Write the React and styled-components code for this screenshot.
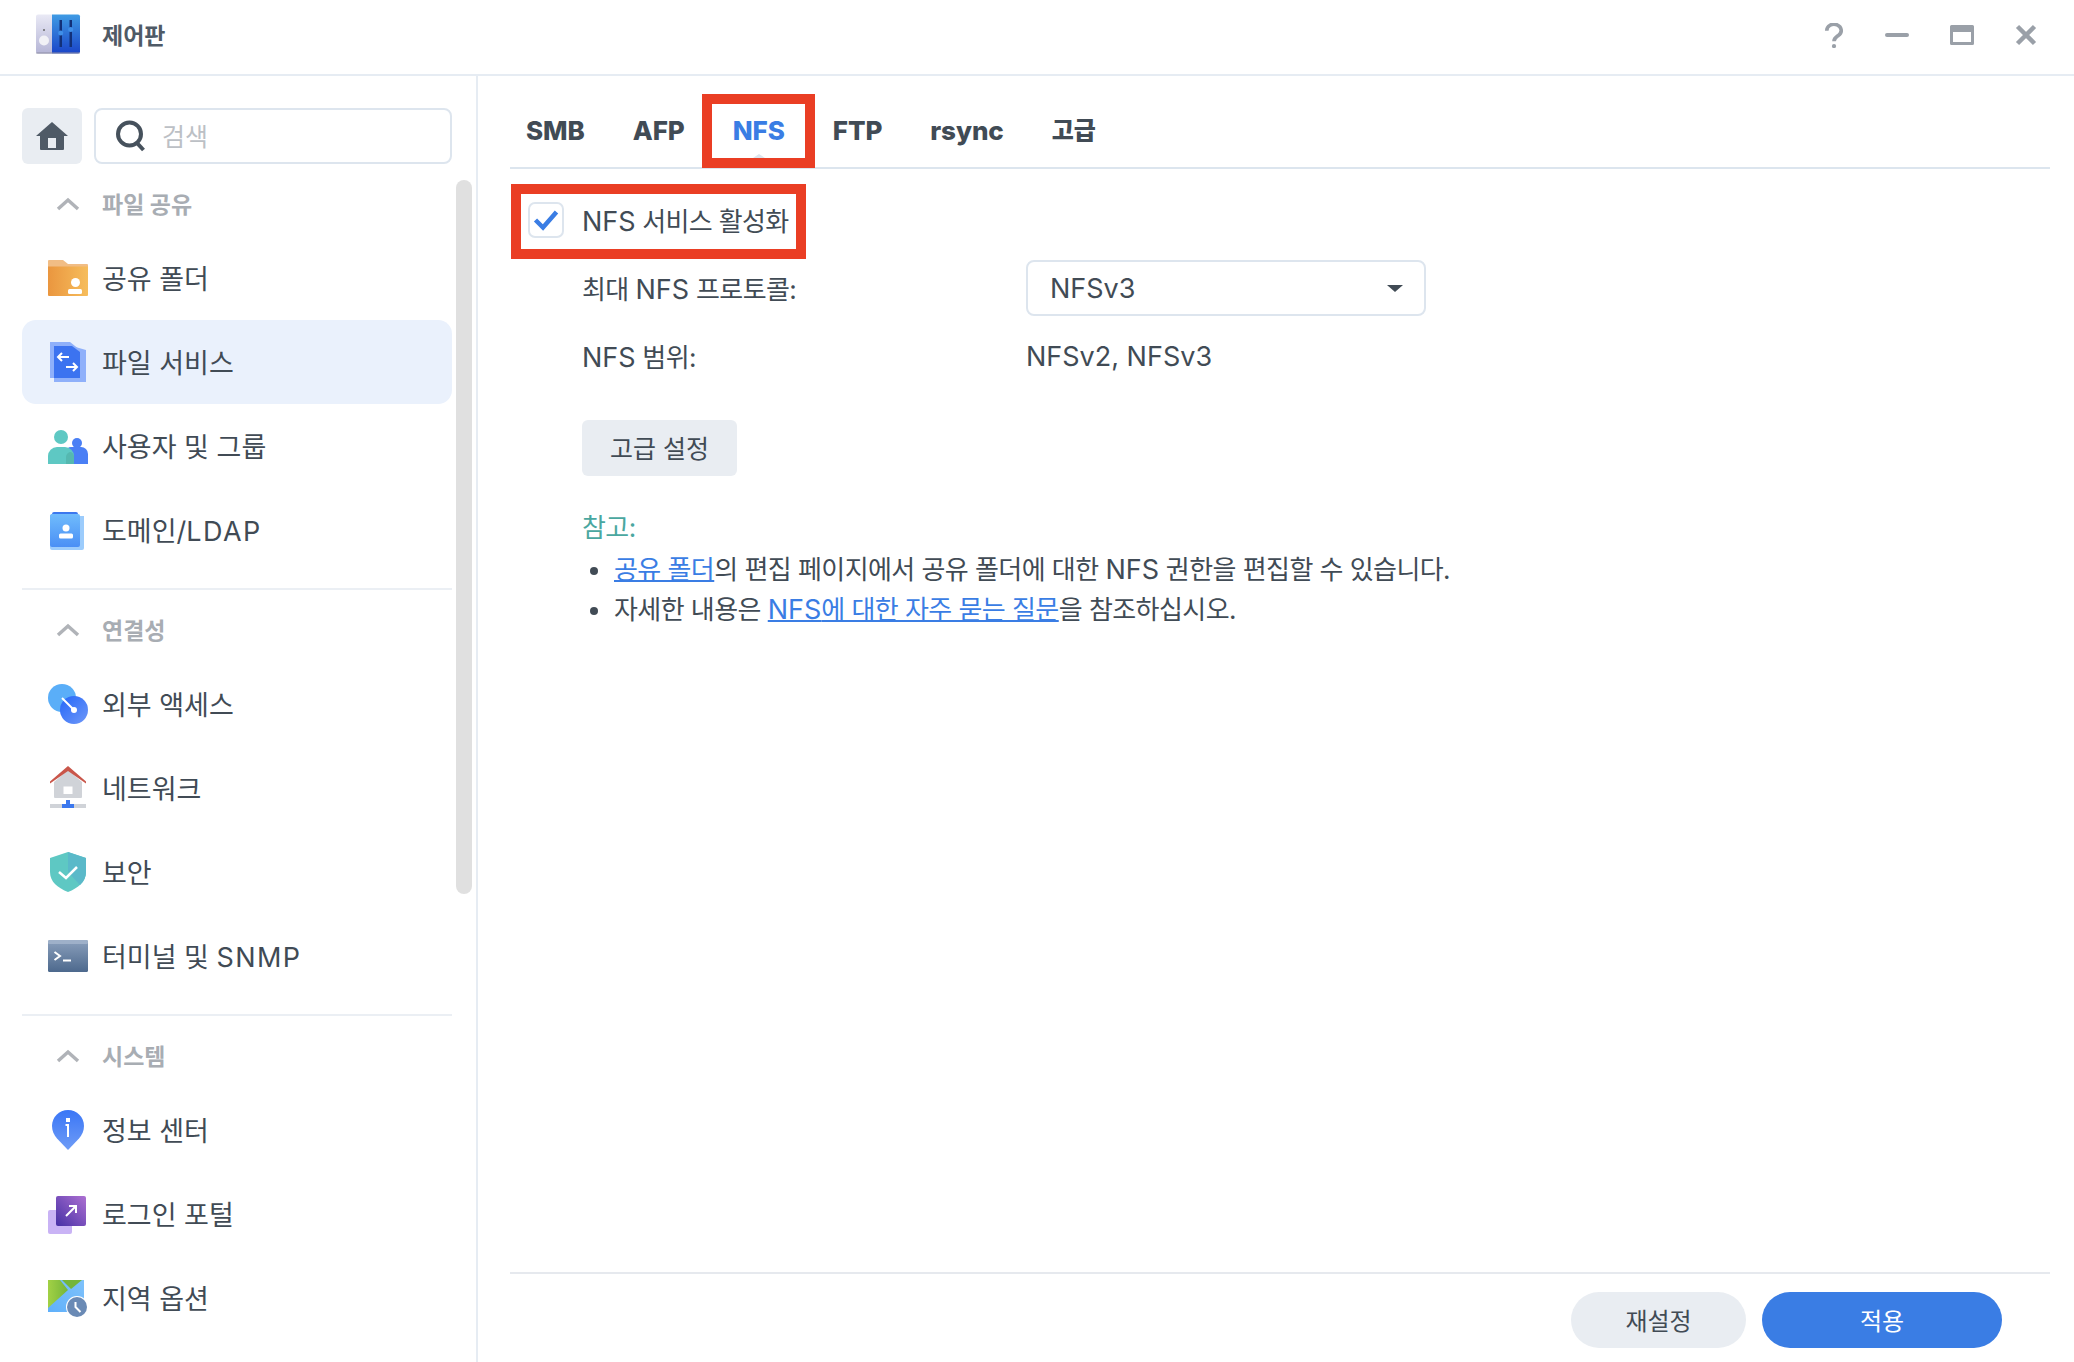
import React from "react";
import styled, { createGlobalStyle } from "styled-components";

const GlobalStyle = createGlobalStyle`
  html, body {
    margin: 0;
    padding: 0;
    background: #fff;
  }
  body {
    font-family: Inter, "Noto Sans CJK KR", sans-serif;
    font-size: 26px;
    color: #414b55;
    overflow: hidden;
  }
`;

const LogoIcon = () => (
  <svg width="48" height="42" viewBox="0 0 48 42">
    <defs>
      <linearGradient id="logoBlue" x1="0" y1="0" x2="0" y2="1">
        <stop offset="0" stopColor="#3f9be4" />
        <stop offset="1" stopColor="#1a45c8" />
      </linearGradient>
      <linearGradient id="logoGrey" x1="0" y1="0" x2="0" y2="1">
        <stop offset="0" stopColor="#e9e9f5" />
        <stop offset="1" stopColor="#b5b5d6" />
      </linearGradient>
    </defs>
    <path d="M2 2.5a2 2 0 0 1 2-2h14v39H4a2 2 0 0 1-2-2z" fill="url(#logoGrey)" />
    <path d="M18 .5h26a2 2 0 0 1 2 2v35a2 2 0 0 1-2 2H18z" fill="url(#logoBlue)" />
    <rect x="2" y="38" width="44" height="2" rx="1" fill="#8d8da3" opacity=".5" />
    <circle cx="10" cy="26.5" r="5" fill="#f1f1f6" />
    <circle cx="10" cy="16" r="1" fill="#666" />
    <rect x="25.5" y="6" width="2.5" height="27" fill="#123078" />
    <rect x="35.5" y="6" width="2.5" height="27" fill="#123078" />
    <circle cx="26.7" cy="19" r="2.5" fill="#3f8fe8" />
    <circle cx="36.7" cy="15.5" r="2.5" fill="#3f8fe8" />
  </svg>
);

const FolderIcon = () => (
  <svg width="40" height="40" viewBox="0 0 40 40">
    <defs>
      <linearGradient id="folderBody" x1="0" y1="0" x2="1" y2="0">
        <stop offset="0" stopColor="#ea963f" />
        <stop offset="1" stopColor="#f6bd5c" />
      </linearGradient>
    </defs>
    <path d="M0 3a1 1 0 0 1 1-1h14l5 4h19a1 1 0 0 1 1 1v6H0z" fill="#f1bd85" />
    <path d="M0 8.5h40V37a1 1 0 0 1-1 1H1a1 1 0 0 1-1-1z" fill="url(#folderBody)" />
    <circle cx="27.5" cy="24.5" r="4.5" fill="#fff" />
    <rect x="20" y="31" width="14" height="5" rx="1.5" fill="#fff" />
  </svg>
);

const FileServiceIcon = () => (
  <svg width="40" height="40" viewBox="0 0 40 40">
    <path d="M2 0h20l10 8v28H2z" fill="#8fb0fa" />
    <path d="M6 4h18l14 4v32H6z" fill="#8fb0fa" />
    <path d="M6 4h18l8 6v26H6z" fill="#3c73f0" />
    <path d="M21 15H10m4-4-4 4 4 4M18 25h11m-4-4 4 4-4 4" fill="none" stroke="#fff" strokeWidth="2" />
  </svg>
);

const UsersIcon = () => (
  <svg width="40" height="40" viewBox="0 0 40 40">
    <circle cx="13" cy="11" r="7" fill="#5ec8c3" />
    <path d="M18 26a5 5 0 0 1 5-5h10a7 7 0 0 1 7 7v10H18z" fill="#4a7ff5" />
    <circle cx="29" cy="17" r="5" fill="#4a7ff5" />
    <path d="M0 30a9 9 0 0 1 9-9h8a9 9 0 0 1 9 9v8H0z" fill="#5ec8c3" />
    <path d="M18 38v-7a5 5 0 0 1 5-5 6 6 0 0 1 3 3.5V38z" fill="#55b8b0" />
  </svg>
);

const DomainIcon = () => (
  <svg width="40" height="40" viewBox="0 0 40 40">
    <defs>
      <linearGradient id="domainBody" x1="0" y1="0" x2="0" y2="1">
        <stop offset="0" stopColor="#70bcfc" />
        <stop offset="1" stopColor="#4a8ff5" />
      </linearGradient>
    </defs>
    <path d="M4 4a2 2 0 0 1 2-2h22a2 2 0 0 1 2 2v2H2z" fill="#3c78ee" />
    <path d="M2 6h34v32a2 2 0 0 1-2 2H4a2 2 0 0 1-2-2z" fill="#9cccfc" />
    <path d="M2 6a2 2 0 0 1 2-2h26a2 2 0 0 1 2 2v29a2 2 0 0 1-2 2H4a2 2 0 0 1-2-2z" fill="url(#domainBody)" />
    <circle cx="18" cy="18" r="3.5" fill="#fff" />
    <rect x="11" y="23.5" width="14" height="5" rx="1.5" fill="#fff" />
  </svg>
);

const ExternalIcon = () => (
  <svg width="40" height="40" viewBox="0 0 40 40">
    <defs>
      <linearGradient id="extDial" x1="0" y1="0" x2="1" y2="1">
        <stop offset="0" stopColor="#2466f8" />
        <stop offset="1" stopColor="#6f98f8" />
      </linearGradient>
    </defs>
    <circle cx="14" cy="14" r="14" fill="#5aaef8" />
    <circle cx="26" cy="26" r="14" fill="url(#extDial)" />
    <path d="M14 14 26 26" stroke="#fff" strokeWidth="2" />
    <circle cx="26" cy="26" r="3" fill="#fff" />
  </svg>
);

const NetworkIcon = () => (
  <svg width="40" height="40" viewBox="0 0 40 40" overflow="visible">
    <path d="M20 2 34 14V29a1 1 0 0 1-1 1H7a1 1 0 0 1-1-1V14z" fill="#d0d3d8" />
    <path d="M20-2 38 13.5V15.5L20 3 2 15.5V13.5z" fill="#c9564a" />
    <rect x="15.5" y="18.5" width="9" height="7.5" fill="#fff" />
    <rect x="2" y="36" width="36" height="4" fill="#d0d3d8" />
    <rect x="18" y="32" width="4" height="4" fill="#3c78ee" />
    <rect x="14" y="36" width="12" height="4" fill="#3c78ee" />
  </svg>
);

const ShieldIcon = () => (
  <svg width="40" height="40" viewBox="0 0 40 40">
    <path d="M20 0 38 6v14c0 10-8 16-18 20C10 36 2 30 2 20V6z" fill="#5ec8c3" />
    <path d="M20 0 38 6v14c0 5-2 9-6 13L20 20z" fill="#5ab9c9" />
    <path d="M11 20l7 6 11-11" fill="none" stroke="#fff" strokeWidth="2.5" />
  </svg>
);

const TerminalIcon = () => (
  <svg width="40" height="40" viewBox="0 0 40 40">
    <defs>
      <linearGradient id="termBody" x1="0" y1="0" x2="0" y2="1">
        <stop offset="0" stopColor="#8a9fbc" />
        <stop offset="1" stopColor="#4d698d" />
      </linearGradient>
    </defs>
    <rect x="0" y="4" width="40" height="32" rx="1.5" fill="url(#termBody)" />
    <rect x="0" y="4" width="40" height="4" rx="1.5" fill="#9eb0c9" />
    <path d="M6.5 16 12 20l-5.5 4" fill="none" stroke="#fff" strokeWidth="2" />
    <path d="M15 24.5h8" stroke="#fff" strokeWidth="2" />
  </svg>
);

const InfoIcon = () => (
  <svg width="40" height="40" viewBox="0 0 40 40">
    <defs>
      <linearGradient id="infoPin" x1="0" y1="0" x2="0" y2="1">
        <stop offset="0" stopColor="#3a76f6" />
        <stop offset="1" stopColor="#6f9cf6" />
      </linearGradient>
    </defs>
    <path d="M20 0c9 0 16 7 16 16 0 5-2 9-5 12.5L20 40 9 28.5C6 25 4 21 4 16 4 7 11 0 20 0z" fill="url(#infoPin)" />
    <rect x="18" y="8" width="4" height="4" fill="#fff" />
    <path d="M17.5 15H20v12" fill="none" stroke="#fff" strokeWidth="2" />
  </svg>
);

const LoginIcon = () => (
  <svg width="40" height="40" viewBox="0 0 40 40">
    <defs>
      <linearGradient id="loginBody" x1="0" y1="1" x2="1" y2="0">
        <stop offset="0" stopColor="#4630a5" />
        <stop offset="1" stopColor="#ad70d2" />
      </linearGradient>
    </defs>
    <rect x="0" y="16" width="24" height="24" rx="2" fill="#c9b3f5" />
    <rect x="8" y="2" width="30" height="30" rx="2" fill="url(#loginBody)" />
    <path d="M18 22l10-10m-7 0h7v7" fill="none" stroke="#fff" strokeWidth="2" />
  </svg>
);

const RegionIcon = () => (
  <svg width="40" height="40" viewBox="0 0 40 40">
    <defs>
      <linearGradient id="regionGreen" x1="0" y1="0" x2="1" y2="0">
        <stop offset="0" stopColor="#a2d145" />
        <stop offset="1" stopColor="#74b53a" />
      </linearGradient>
      <linearGradient id="regionBlue" x1="0" y1="1" x2="1" y2="0">
        <stop offset="0" stopColor="#5fb0fb" />
        <stop offset="1" stopColor="#7fc2fb" />
      </linearGradient>
    </defs>
    <path d="M0 2h36v32H0z" fill="url(#regionBlue)" />
    <path d="M0 2h12l8 10L0 30z" fill="url(#regionGreen)" />
    <path d="M14 2h20L23 11z" fill="#74b53a" />
    <circle cx="29" cy="29" r="11" fill="#fff" />
    <circle cx="29" cy="29" r="10" fill="#6a8ab5" />
    <path d="M27.5 24v5l5 5" fill="none" stroke="#fff" strokeWidth="2" />
  </svg>
);

const HomeIcon = () => (
  <svg width="34" height="30" viewBox="0 0 34 30">
    <path d="M17 1 33 15H29V28a1 1 0 0 1-1 1H6a1 1 0 0 1-1-1V15H1z" fill="#4f5a66" />
    <rect x="13" y="17" width="8" height="10" fill="#e9edf2" />
  </svg>
);

const SearchIcon = () => (
  <svg width="30" height="32" viewBox="0 0 30 32">
    <circle cx="13.5" cy="14" r="11.5" fill="none" stroke="#46515c" strokeWidth="4" />
    <path d="M21 23 27.5 30" stroke="#46515c" strokeWidth="4" />
  </svg>
);

const ChevronIcon = () => (
  <svg width="24" height="14" viewBox="0 0 24 14">
    <path d="M2 12 12 3l10 9" fill="none" stroke="#b0b3b8" strokeWidth="3.5" />
  </svg>
);

const sections = [
  {
    title: "파일 공유",
    items: [
      { key: "folder", label: "공유 폴더", icon: FolderIcon },
      { key: "file", label: "파일 서비스", icon: FileServiceIcon, active: true },
      { key: "user", label: "사용자 및 그룹", icon: UsersIcon },
      { key: "domain", label: "도메인/", latin: "LDAP", icon: DomainIcon },
    ],
  },
  {
    title: "연결성",
    items: [
      { key: "external", label: "외부 액세스", icon: ExternalIcon },
      { key: "network", label: "네트워크", icon: NetworkIcon },
      { key: "security", label: "보안", icon: ShieldIcon },
      { key: "terminal", label: "터미널 및 ", latin: "SNMP", icon: TerminalIcon },
    ],
  },
  {
    title: "시스템",
    items: [
      { key: "info", label: "정보 센터", icon: InfoIcon },
      { key: "login", label: "로그인 포털", icon: LoginIcon },
      { key: "region", label: "지역 옵션", icon: RegionIcon },
    ],
  },
];

const tabs = ["SMB", "AFP", "NFS", "FTP", "rsync", "고급"];

const App = () => {
  return (
    <Window>
      <GlobalStyle />
      <TitleBar>
        <AppTitle>
          <LogoIcon />
          <span>제어판</span>
        </AppTitle>
        <WindowControls>
          <svg width="20" height="25" viewBox="0 0 20 26">
            <path d="M2.5 8a7.5 6.5 0 1 1 12 5c-2.5 1.8-4.5 3-4.5 6" fill="none" stroke="#9aa0a8" strokeWidth="3.8" />
            <circle cx="10" cy="24" r="2.2" fill="#9aa0a8" />
          </svg>
          <svg width="24" height="6" viewBox="0 0 24 6">
            <rect y="1" width="24" height="4" rx="2" fill="#9aa0a8" />
          </svg>
          <svg width="24" height="20" viewBox="0 0 24 20">
            <path fillRule="evenodd" d="M1.5 0h21A1.5 1.5 0 0 1 24 1.5v17a1.5 1.5 0 0 1-1.5 1.5h-21A1.5 1.5 0 0 1 0 18.5v-17A1.5 1.5 0 0 1 1.5 0zM3 7v10h18V7z" fill="#9aa0a8" />
          </svg>
          <svg width="22" height="22" viewBox="0 0 22 22">
            <path d="M2.5 2.5l17 17m0-17-17 17" fill="none" stroke="#9aa0a8" strokeWidth="4.5" />
          </svg>
        </WindowControls>
      </TitleBar>
      <Body>
        <Sidebar>
          <SearchRow>
            <HomeButton>
              <HomeIcon />
            </HomeButton>
            <SearchBox>
              <SearchIcon />
              <span>검색</span>
            </SearchBox>
          </SearchRow>
          {sections.map((section, index) => (
            <React.Fragment key={section.title}>
              {index > 0 && <Divider />}
              <SectionHeader>
                <ChevronIcon />
                <span>{section.title}</span>
              </SectionHeader>
              {section.items.map((item) => (
                <NavItem key={item.key} $active={item.active}>
                  <item.icon />
                  <span>
                    {item.label}
                    {item.latin && <NavLatin>{item.latin}</NavLatin>}
                  </span>
                </NavItem>
              ))}
            </React.Fragment>
          ))}
          <ScrollThumb />
        </Sidebar>
        <Main>
          <TabBar>
            {tabs.map((tab) => (
              <Tab key={tab} $active={tab === "NFS"} $hangul={tab === "고급"}>
                {tab}
              </Tab>
            ))}
          </TabBar>
          <Form>
            <EnableRow>
              <Checkbox>
                <svg width="26" height="22" viewBox="0 0 26 22">
                  <path d="M2.5 11 10 18.5 23.5 3" fill="none" stroke="#3a7de4" strokeWidth="4.5" />
                </svg>
              </Checkbox>
              <span>
                <Latin>NFS</Latin> 서비스 활성화
              </span>
            </EnableRow>
            <FieldRow>
              <FieldLabel>
                최대 <Latin>NFS</Latin> 프로토콜:
              </FieldLabel>
              <Select>
                <Latin>NFSv3</Latin>
                <SelectCaret />
              </Select>
            </FieldRow>
            <FieldRow>
              <FieldLabel>
                <Latin>NFS</Latin> 범위:
              </FieldLabel>
              <Latin>NFSv2, NFSv3</Latin>
            </FieldRow>
            <AdvancedButton>고급 설정</AdvancedButton>
            <Note>
              <NoteTitle>참고:</NoteTitle>
              <NoteList>
                <li>
                  <a href="#folder">공유 폴더</a>의 편집 페이지에서 공유 폴더에 대한 <Latin>NFS</Latin> 권한을 편집할 수 있습니다.
                </li>
                <li>
                  자세한 내용은 <a href="#faq"><Latin>NFS</Latin>에 대한 자주 묻는 질문</a>을 참조하십시오.
                </li>
              </NoteList>
            </Note>
          </Form>
          <Footer>
            <ResetButton>재설정</ResetButton>
            <ApplyButton>적용</ApplyButton>
          </Footer>
        </Main>
      </Body>
    </Window>
  );
};

const Window = styled.div`
  width: 2074px;
  height: 1362px;
  display: flex;
  flex-direction: column;
  background: #fff;
`;

const TitleBar = styled.header`
  height: 76px;
  flex: none;
  box-sizing: border-box;
  padding-bottom: 4px;
  border-bottom: 2px solid #e6ecf3;
  display: flex;
  align-items: center;
  justify-content: space-between;
`;

const AppTitle = styled.div`
  display: flex;
  align-items: center;
  gap: 20px;
  padding-left: 34px;
  font-size: 23px;
  font-weight: 700;
  color: #4f5a66;

  span {
    margin-bottom: 2px;
  }
`;

const WindowControls = styled.div`
  display: flex;
  align-items: center;
  gap: 41px;
  padding-right: 37px;
`;

const Body = styled.div`
  flex: 1;
  min-height: 0;
  display: flex;
`;

const Sidebar = styled.aside`
  position: relative;
  width: 476px;
  flex: none;
  box-sizing: content-box;
  border-right: 2px solid #e6ecf3;
  padding-top: 32px;
`;

const SearchRow = styled.div`
  display: flex;
  gap: 12px;
  margin: 0 24px 8px 22px;
`;

const HomeButton = styled.div`
  width: 60px;
  height: 56px;
  flex: none;
  display: flex;
  align-items: center;
  justify-content: center;
  background: #e9edf2;
  border-radius: 6px;
`;

const SearchBox = styled.div`
  flex: 1;
  height: 56px;
  box-sizing: border-box;
  display: flex;
  align-items: center;
  gap: 16px;
  padding-left: 20px;
  border: 2px solid #dde5ee;
  border-radius: 8px;
  color: #bcc0c5;
  font-size: 25px;

  span {
    margin-bottom: 2px;
  }
`;

const SectionHeader = styled.div`
  height: 64px;
  display: flex;
  align-items: center;
  gap: 22px;
  padding-left: 56px;
  font-size: 23px;
  font-weight: 700;
  color: #a8adb3;

  span {
    margin-bottom: 3px;
  }
`;

const NavItem = styled.div`
  height: 84px;
  display: flex;
  align-items: center;
  gap: 14px;
  margin: 0 24px 0 22px;
  padding-left: 26px;
  font-size: 27px;
  color: #414b55;
  border-radius: 14px;
  background: ${(p) => (p.$active ? "#eaf1fc" : "transparent")};

  span {
    margin-bottom: 1px;
  }
`;

const NavLatin = styled.b`
  font-weight: 400;
  letter-spacing: 1.4px;
`;

const Latin = styled.span`
  font-size: 27px;
  letter-spacing: 0;
`;

const Divider = styled.div`
  height: 2px;
  margin: 16px 24px 8px 22px;
  background: #ebeff4;
`;

const ScrollThumb = styled.div`
  position: absolute;
  top: 104px;
  left: 456px;
  width: 16px;
  height: 714px;
  border-radius: 8px;
  background: #e0e0e0;
`;

const Main = styled.main`
  flex: 1;
  min-width: 0;
  display: flex;
  flex-direction: column;
  padding: 0 24px 0 32px;
`;

const TabBar = styled.nav`
  height: 93px;
  flex: none;
  box-sizing: border-box;
  display: flex;
  align-items: center;
  gap: 48px;
  padding: 18px 0 0 16px;
  border-bottom: 2px solid #dce5ee;
`;

const Tab = styled.div`
  position: relative;
  line-height: 32px;
  font-size: ${(p) => (p.$hangul ? "24px" : "26px")};
  font-weight: 800;
  letter-spacing: -0.08px;
  color: ${(p) => (p.$active ? "#3a7de4" : "#414b55")};

  ${(p) =>
    p.$active &&
    `
    &::before {
      content: "";
      position: absolute;
      bottom: -11px;
      left: 50%;
      margin-left: -6px;
      border-left: 6px solid transparent;
      border-right: 6px solid transparent;
      border-bottom: 4px solid #dce5ee;
    }
    &::after {
      content: "";
      position: absolute;
      top: -21px;
      bottom: -21px;
      left: -31px;
      right: -30px;
      border: 10px solid #ea3e24;
    }
  `}
`;

const Form = styled.div`
  flex: 1;
  padding-top: 23px;
  letter-spacing: -0.55px;
`;

const EnableRow = styled.div`
  position: relative;
  width: max-content;
  height: 56px;
  display: flex;
  align-items: center;
  gap: 18px;
  padding-left: 18px;
  letter-spacing: -0.65px;

  &::after {
    content: "";
    position: absolute;
    top: -8px;
    bottom: -11px;
    left: 1px;
    right: -17px;
    border: 10px solid #ea3e24;
  }

  > span {
    margin-bottom: 2px;
  }
`;

const Checkbox = styled.div`
  width: 36px;
  height: 36px;
  box-sizing: border-box;
  display: flex;
  align-items: center;
  justify-content: center;
  border: 2px solid #dde5ee;
  border-radius: 7px;
`;

const FieldRow = styled.div`
  height: 56px;
  margin: 12px 0 0 72px;
  display: flex;
  align-items: center;
`;

const FieldLabel = styled.div`
  width: 444px;
  flex: none;
  margin-bottom: 2px;
`;

const Select = styled.div`
  width: 400px;
  height: 56px;
  box-sizing: border-box;
  display: flex;
  align-items: center;
  justify-content: space-between;
  padding: 0 21px 0 22px;
  border: 2px solid #dde5ee;
  border-radius: 8px;
`;

const SelectCaret = styled.i`
  width: 0;
  height: 0;
  border-left: 8px solid transparent;
  border-right: 8px solid transparent;
  border-top: 7px solid #414b55;
`;

const AdvancedButton = styled.div`
  width: 155px;
  height: 56px;
  box-sizing: border-box;
  padding-bottom: 2px;
  margin: 36px 0 0 72px;
  display: flex;
  align-items: center;
  justify-content: center;
  background: #e9edf2;
  border-radius: 6px;
  font-size: 25px;
  letter-spacing: 0;
`;

const Note = styled.div`
  margin: 32px 0 0 72px;
  line-height: 40px;
`;

const NoteTitle = styled.div`
  color: #4aa7a0;
`;

const NoteList = styled.ul`
  list-style: none;
  margin: 2px 0 0;
  padding: 0;

  li {
    position: relative;
    padding-left: 32px;
  }

  li::before {
    content: "";
    position: absolute;
    left: 8px;
    top: 17px;
    width: 8px;
    height: 8px;
    border-radius: 50%;
    background: #414b55;
  }

  a {
    color: #3a7de4;
    text-decoration: underline;
    text-decoration-thickness: 2px;
  }
`;

const Footer = styled.footer`
  height: 90px;
  flex: none;
  box-sizing: border-box;
  border-top: 2px solid #e6e9ee;
  display: flex;
  gap: 16px;
  justify-content: flex-end;
  padding: 18px 48px 0 0;
`;

const PillButton = styled.div`
  height: 56px;
  display: flex;
  align-items: center;
  justify-content: center;
  border-radius: 28px;
  font-size: 24px;
  box-sizing: border-box;
  padding-bottom: 2px;
`;

const ResetButton = styled(PillButton)`
  width: 175px;
  background: #e9edf2;
`;

const ApplyButton = styled(PillButton)`
  width: 240px;
  background: #3a7de4;
  color: #fff;
`;

export default App;
